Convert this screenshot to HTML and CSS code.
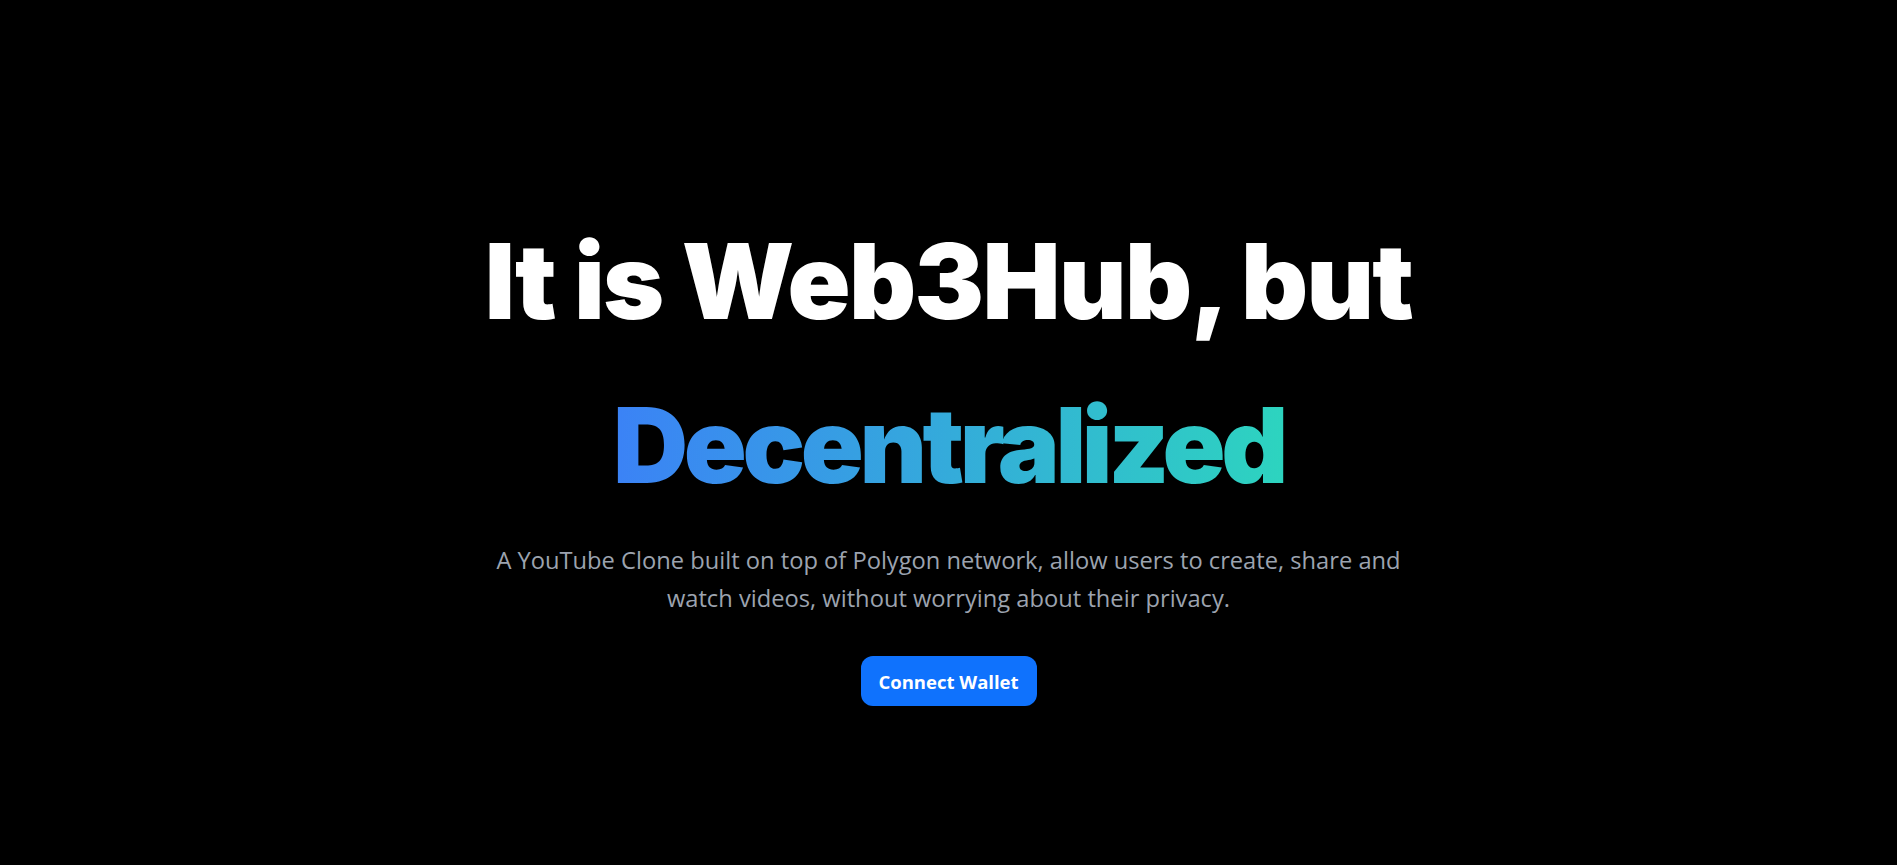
FILE: index.html
```html
<!DOCTYPE html>
<html lang="en">
<head>
<meta charset="utf-8">
<title>Web3Hub</title>
<link rel="stylesheet" href="styles.css">
</head>
<body>
<main class="hero">
  <h1 class="title">
    <span class="title-line">It is Web3Hub, but</span>
    <span class="title-line gradient">Decentralized</span>
  </h1>
  <p class="subtitle">A YouTube Clone built on top of Polygon network, allow users to create, share and<br>watch videos, without worrying about their privacy.</p>
  <button class="connect" type="button">Connect Wallet</button>
</main>
</body>
</html>
```
FILE: styles.css
```css
html, body {
  margin: 0;
  padding: 0;
  background: #000;
  height: 100%;
}
.hero {
  display: flex;
  flex-direction: column;
  align-items: center;
  padding-top: 229px;
  text-align: center;
}
.title {
  margin: 0;
  display: flex;
  flex-direction: column;
  align-items: center;
  gap: 60px;
  font-family: Inter, "Liberation Sans", sans-serif;
  font-weight: 900;
  font-size: 104px;
  line-height: 104px;
  letter-spacing: -1.6px;
  color: #fff;
}
.title-line {
  display: block;
  white-space: nowrap;
}
.gradient {
  display: inline-block;
  letter-spacing: -4.4px;
  background: linear-gradient(90deg, #3b82f6 0%, #2dd4bf 100%);
  -webkit-background-clip: text;
  background-clip: text;
  color: transparent;
}
.subtitle {
  margin: 44px 0 0;
  font-family: "Open Sans", "Liberation Sans", sans-serif;
  font-size: 23.7px;
  line-height: 38px;
  color: #9ca3af;
}
.connect {
  margin-top: 39px;
  width: 176px;
  height: 50px;
  padding: 0;
  border: 0;
  border-radius: 12px;
  background: #0f72fd;
  color: #fff;
  font-family: "Open Sans", "Liberation Sans", sans-serif;
  font-weight: 700;
  font-size: 18.5px;
  cursor: pointer;
}
```
